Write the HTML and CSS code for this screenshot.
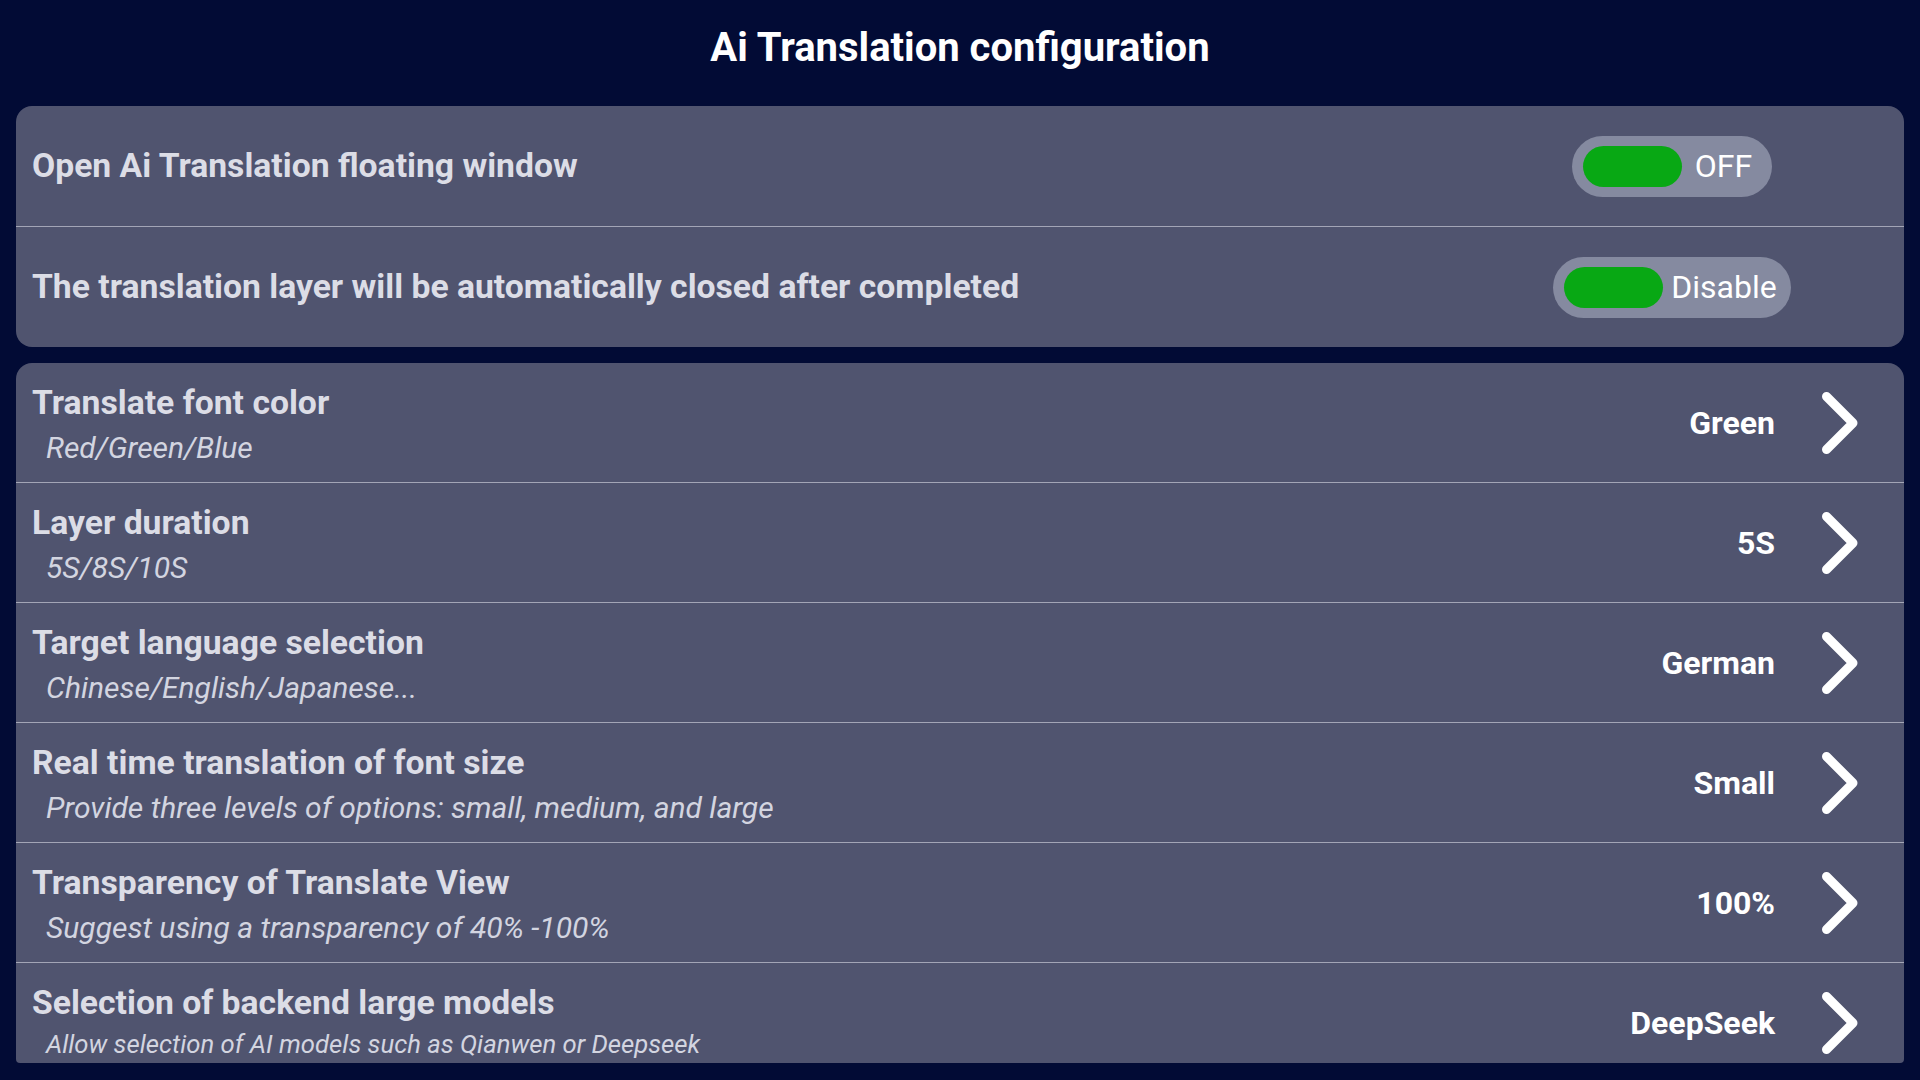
FILE: index.html
```html
<!DOCTYPE html>
<html lang="en">
<head>
    <meta charset="UTF-8">
    <title>Ai Translation configuration</title>
    <link rel="stylesheet" href="styles.css">
</head>
<body>
    <h1 class="page-title">Ai Translation configuration</h1>

    <div class="panel">
        <div class="row">
            <div class="row-title">Open Ai Translation floating window</div>
            <div class="toggle-cell">
                <div class="toggle"><span class="knob"></span><span class="toggle-text">OFF</span></div>
            </div>
        </div>
        <div class="row">
            <div class="row-title">The translation layer will be automatically closed after completed</div>
            <div class="toggle-cell">
                <div class="toggle toggle-wide"><span class="knob"></span><span class="toggle-text">Disable</span></div>
            </div>
        </div>
    </div>

    <div class="panel panel-list">
        <div class="item">
            <div class="item-text">
                <div class="row-title">Translate font color</div>
                <div class="row-sub">Red/Green/Blue</div>
            </div>
            <div class="item-value">Green</div>
            <svg class="chevron" viewBox="0 0 36 62"><path d="M4.5 4.5 L31 31 L4.5 57.5"/></svg>
        </div>
        <div class="item">
            <div class="item-text">
                <div class="row-title">Layer duration</div>
                <div class="row-sub">5S/8S/10S</div>
            </div>
            <div class="item-value">5S</div>
            <svg class="chevron" viewBox="0 0 36 62"><path d="M4.5 4.5 L31 31 L4.5 57.5"/></svg>
        </div>
        <div class="item">
            <div class="item-text">
                <div class="row-title">Target language selection</div>
                <div class="row-sub">Chinese/English/Japanese...</div>
            </div>
            <div class="item-value">German</div>
            <svg class="chevron" viewBox="0 0 36 62"><path d="M4.5 4.5 L31 31 L4.5 57.5"/></svg>
        </div>
        <div class="item">
            <div class="item-text">
                <div class="row-title">Real time translation of font size</div>
                <div class="row-sub">Provide three levels of options: small, medium, and large</div>
            </div>
            <div class="item-value">Small</div>
            <svg class="chevron" viewBox="0 0 36 62"><path d="M4.5 4.5 L31 31 L4.5 57.5"/></svg>
        </div>
        <div class="item">
            <div class="item-text">
                <div class="row-title">Transparency of Translate View</div>
                <div class="row-sub">Suggest using a transparency of 40% -100%</div>
            </div>
            <div class="item-value">100%</div>
            <svg class="chevron" viewBox="0 0 36 62"><path d="M4.5 4.5 L31 31 L4.5 57.5"/></svg>
        </div>
        <div class="item item-last">
            <div class="item-text">
                <div class="row-title">Selection of backend large models</div>
                <div class="row-sub">Allow selection of AI models such as Qianwen or Deepseek</div>
            </div>
            <div class="item-value">DeepSeek</div>
            <svg class="chevron" viewBox="0 0 36 62"><path d="M4.5 4.5 L31 31 L4.5 57.5"/></svg>
        </div>
    </div>
</body>
</html>
```

FILE: styles.css
```css
* {
    margin: 0;
    padding: 0;
    box-sizing: border-box;
}

body {
    font-family: Roboto, "Liberation Sans", sans-serif;
    background: #020b35;
    height: 1080px;
    overflow: hidden;
}

.page-title {
    color: #ffffff;
    font-size: 40px;
    font-weight: 700;
    line-height: 48px;
    text-align: center;
    padding-top: 24px;
    height: 106px;
}

.panel {
    margin: 0 16px;
    background: #50546f;
    border-radius: 16px;
    overflow: hidden;
}

.row {
    height: 120px;
    display: flex;
    align-items: center;
    padding: 0 100px 0 16px;
}

.row + .row {
    border-top: 1px solid #a3a5b6;
    height: 121px;
}

.row-title {
    flex: 1;
    color: #dcdde6;
    font-size: 33.7px;
    font-weight: 700;
    line-height: 40px;
    white-space: nowrap;
}

.toggle-cell {
    width: 264px;
    display: flex;
    justify-content: center;
}

.toggle {
    height: 61px;
    border-radius: 31px;
    background: #858aa0;
    display: flex;
    align-items: center;
    padding: 0 20px 0 11px;
    gap: 13px;
}

.toggle-wide {
    gap: 8px;
    padding-right: 14px;
}

.knob {
    width: 99px;
    height: 41px;
    border-radius: 21px;
    background: #08a814;
}

.toggle-text {
    color: #ffffff;
    font-size: 32px;
    line-height: 40px;
}

/* list is scrolled, the last row is cut off */
.panel-list {
    margin-top: 16px;
    height: 700px;
    border-radius: 16px 16px 4px 4px;
}

.item {
    height: 120px;
    display: flex;
    align-items: center;
    padding: 0 46px 0 16px;
    border-bottom: 1px solid #a3a5b6;
}

.item-text {
    flex: 1;
    align-self: flex-start;
    padding-top: 20px;
}

.row-sub {
    color: #d3d5e0;
    font-size: 30px;
    font-style: italic;
    line-height: 36px;
    margin-top: 7px;
    padding-left: 14px;
    white-space: nowrap;
}

.item-value {
    color: #ffffff;
    font-size: 32px;
    font-weight: 700;
}

.chevron {
    width: 36px;
    height: 62px;
    margin-left: 47px;
    fill: none;
    stroke: #ffffff;
    stroke-width: 9;
    stroke-linecap: round;
    stroke-linejoin: round;
}

.item-last {
    border-bottom: none;
}

.item-last .row-sub {
    font-size: 25.7px;
    line-height: 30px;
    margin-top: 6px;
}
```
